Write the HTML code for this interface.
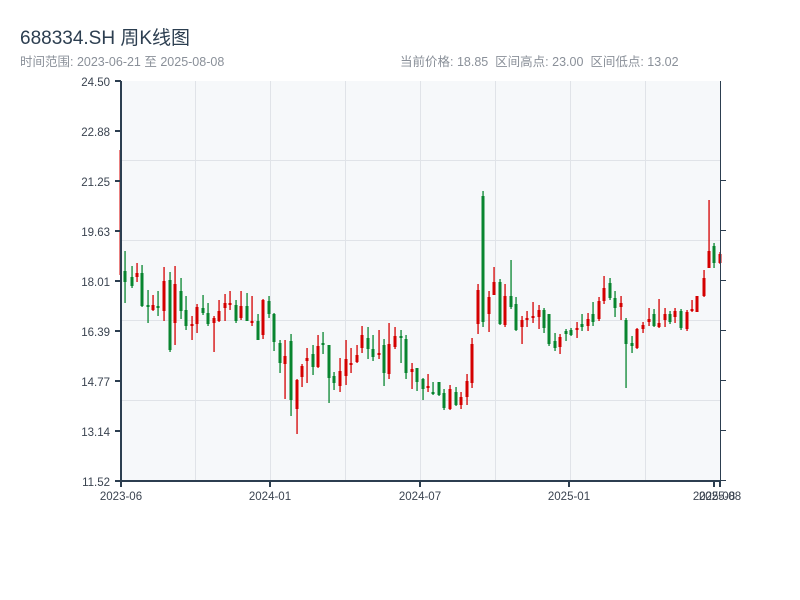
<!DOCTYPE html>
<html><head><meta charset="utf-8"><style>
body{margin:0;width:800px;height:600px;background:#fff;font-family:"Liberation Sans","Noto Sans CJK SC",sans-serif;overflow:hidden;position:relative}
.t{position:absolute;white-space:nowrap}
</style></head><body>
<div class="t" style="left:20px;top:23px;font-size:19px;color:#2c3e50">688334.SH 周K线图</div>
<div class="t" style="left:20px;top:51px;font-size:12.5px;color:#8a9099">时间范围: 2023-06-21 至 2025-08-08</div>
<div class="t" style="left:400px;top:51px;font-size:12.5px;color:#8a9099">当前价格: 18.85 &nbsp;区间高点: 23.00 &nbsp;区间低点: 13.02</div>
<svg width="800" height="600" style="position:absolute;left:0;top:0" xmlns="http://www.w3.org/2000/svg">
<rect x="121" y="81" width="599" height="400" fill="#f6f8fa"/>
<g stroke="#e0e3e8" stroke-width="1">
<line x1="195.5" y1="81" x2="195.5" y2="481"/><line x1="270.5" y1="81" x2="270.5" y2="481"/><line x1="345.5" y1="81" x2="345.5" y2="481"/><line x1="420.5" y1="81" x2="420.5" y2="481"/><line x1="495.5" y1="81" x2="495.5" y2="481"/><line x1="570.5" y1="81" x2="570.5" y2="481"/><line x1="645.5" y1="81" x2="645.5" y2="481"/>
<line x1="121" y1="160.5" x2="720" y2="160.5"/><line x1="121" y1="240.5" x2="720" y2="240.5"/><line x1="121" y1="320.5" x2="720" y2="320.5"/><line x1="121" y1="400.5" x2="720" y2="400.5"/>
</g>
<g fill="#d40000">
<rect x="119.5" y="150" width="1.5" height="125"/>
<rect x="136.4" y="263" width="1.3" height="19"/><rect x="135.5" y="273" width="3" height="4"/>
<rect x="152.4" y="295" width="1.3" height="16"/><rect x="151.5" y="305" width="3" height="5"/>
<rect x="163.4" y="267" width="1.3" height="54"/><rect x="162.5" y="281" width="3" height="30"/>
<rect x="174.4" y="266" width="1.3" height="79"/><rect x="173.5" y="284" width="3" height="39"/>
<rect x="191.4" y="316" width="1.3" height="24"/><rect x="190.5" y="324" width="3" height="2"/>
<rect x="196.4" y="304" width="1.3" height="29"/><rect x="195.5" y="307" width="3" height="17"/>
<rect x="213.4" y="316" width="1.3" height="36"/><rect x="212.5" y="318" width="3" height="5"/>
<rect x="218.4" y="300" width="1.3" height="22"/><rect x="217.5" y="311" width="3" height="10"/>
<rect x="224.4" y="294" width="1.3" height="27"/><rect x="223.5" y="303" width="3" height="5"/>
<rect x="229.4" y="291" width="1.3" height="19"/><rect x="228.5" y="303" width="3" height="2"/>
<rect x="240.4" y="291" width="1.3" height="29"/><rect x="239.5" y="306" width="3" height="12"/>
<rect x="251.4" y="296" width="1.3" height="30"/><rect x="250.5" y="321" width="3" height="2"/>
<rect x="262.4" y="299" width="1.3" height="40"/><rect x="261.5" y="300" width="3" height="35"/>
<rect x="284.4" y="340" width="1.3" height="59"/><rect x="283.5" y="356" width="3" height="8"/>
<rect x="296.4" y="379" width="1.3" height="55"/><rect x="295.5" y="380" width="3" height="29"/>
<rect x="301.4" y="364" width="1.3" height="23"/><rect x="300.5" y="366" width="3" height="11"/>
<rect x="306.4" y="348" width="1.3" height="35"/><rect x="305.5" y="358" width="3" height="3"/>
<rect x="317.4" y="335" width="1.3" height="33"/><rect x="316.5" y="346" width="3" height="21"/>
<rect x="339.4" y="358" width="1.3" height="34"/><rect x="338.5" y="371" width="3" height="15"/>
<rect x="345.4" y="340" width="1.3" height="45"/><rect x="344.5" y="359" width="3" height="17"/>
<rect x="350.4" y="348" width="1.3" height="25"/><rect x="349.5" y="363" width="3" height="2"/>
<rect x="356.4" y="345" width="1.3" height="18"/><rect x="355.5" y="355" width="3" height="7"/>
<rect x="361.4" y="326" width="1.3" height="27"/><rect x="360.5" y="335" width="3" height="13"/>
<rect x="378.4" y="330" width="1.3" height="29"/><rect x="377.5" y="353" width="3" height="2"/>
<rect x="388.4" y="323" width="1.3" height="56"/><rect x="387.5" y="344" width="3" height="30"/>
<rect x="394.4" y="327" width="1.3" height="22"/><rect x="393.5" y="336" width="3" height="11"/>
<rect x="411.4" y="363" width="1.3" height="26"/><rect x="410.5" y="369" width="3" height="3"/>
<rect x="427.4" y="374" width="1.3" height="18"/><rect x="426.5" y="386" width="3" height="2"/>
<rect x="449.4" y="385" width="1.3" height="25"/><rect x="448.5" y="389" width="3" height="20"/>
<rect x="460.4" y="392" width="1.3" height="17"/><rect x="459.5" y="397" width="3" height="8"/>
<rect x="466.4" y="374" width="1.3" height="31"/><rect x="465.5" y="381" width="3" height="16"/>
<rect x="471.4" y="338" width="1.3" height="50"/><rect x="470.5" y="344" width="3" height="39"/>
<rect x="477.4" y="284" width="1.3" height="50"/><rect x="476.5" y="290" width="3" height="34"/>
<rect x="488.4" y="291" width="1.3" height="41"/><rect x="487.5" y="297" width="3" height="17"/>
<rect x="493.4" y="267" width="1.3" height="28"/><rect x="492.5" y="282" width="3" height="13"/>
<rect x="504.4" y="284" width="1.3" height="43"/><rect x="503.5" y="296" width="3" height="29"/>
<rect x="521.4" y="316" width="1.3" height="28"/><rect x="520.5" y="320" width="3" height="7"/>
<rect x="526.4" y="311" width="1.3" height="16"/><rect x="525.5" y="318" width="3" height="2"/>
<rect x="532.4" y="302" width="1.3" height="21"/><rect x="531.5" y="316" width="3" height="2"/>
<rect x="538.4" y="305" width="1.3" height="24"/><rect x="537.5" y="310" width="3" height="7"/>
<rect x="559.4" y="334" width="1.3" height="20"/><rect x="558.5" y="337" width="3" height="10"/>
<rect x="576.4" y="322" width="1.3" height="16"/><rect x="575.5" y="328" width="3" height="2"/>
<rect x="587.4" y="313" width="1.3" height="18"/><rect x="586.5" y="319" width="3" height="7"/>
<rect x="598.4" y="297" width="1.3" height="24"/><rect x="597.5" y="301" width="3" height="18"/>
<rect x="603.4" y="276" width="1.3" height="28"/><rect x="602.5" y="288" width="3" height="13"/>
<rect x="620.4" y="296" width="1.3" height="24"/><rect x="619.5" y="303" width="3" height="4"/>
<rect x="636.4" y="328" width="1.3" height="21"/><rect x="635.5" y="329" width="3" height="19"/>
<rect x="642.4" y="322" width="1.3" height="11"/><rect x="641.5" y="325" width="3" height="4"/>
<rect x="648.4" y="308" width="1.3" height="18"/><rect x="647.5" y="319" width="3" height="3"/>
<rect x="658.4" y="299" width="1.3" height="29"/><rect x="657.5" y="323" width="3" height="4"/>
<rect x="664.4" y="308" width="1.3" height="19"/><rect x="663.5" y="314" width="3" height="6"/>
<rect x="674.4" y="308" width="1.3" height="15"/><rect x="673.5" y="311" width="3" height="6"/>
<rect x="686.4" y="310" width="1.3" height="21"/><rect x="685.5" y="312" width="3" height="17"/>
<rect x="691.4" y="300" width="1.3" height="12"/><rect x="690.5" y="309" width="3" height="2"/>
<rect x="696.4" y="296" width="1.3" height="16"/><rect x="695.5" y="296" width="3" height="16"/>
<rect x="703.4" y="270" width="1.3" height="27"/><rect x="702.5" y="278" width="3" height="18"/>
<rect x="708.4" y="200" width="1.3" height="68"/><rect x="707.5" y="251" width="3" height="17"/>
<rect x="719.4" y="252" width="1.3" height="12"/><rect x="718.5" y="254" width="3" height="9"/>
</g>
<g fill="#08852f">
<rect x="124.4" y="251" width="1.3" height="52"/><rect x="123.5" y="271" width="3" height="11"/>
<rect x="131.4" y="266" width="1.3" height="22"/><rect x="130.5" y="277" width="3" height="9"/>
<rect x="141.4" y="265" width="1.3" height="42"/><rect x="140.5" y="273" width="3" height="33"/>
<rect x="147.4" y="290" width="1.3" height="33"/><rect x="146.5" y="305" width="3" height="2"/>
<rect x="157.4" y="291" width="1.3" height="25"/><rect x="156.5" y="306" width="3" height="2"/>
<rect x="169.4" y="272" width="1.3" height="80"/><rect x="168.5" y="280" width="3" height="70"/>
<rect x="180.4" y="278" width="1.3" height="41"/><rect x="179.5" y="291" width="3" height="20"/>
<rect x="185.4" y="296" width="1.3" height="34"/><rect x="184.5" y="310" width="3" height="16"/>
<rect x="202.4" y="295" width="1.3" height="20"/><rect x="201.5" y="308" width="3" height="5"/>
<rect x="207.4" y="303" width="1.3" height="23"/><rect x="206.5" y="313" width="3" height="11"/>
<rect x="235.4" y="300" width="1.3" height="23"/><rect x="234.5" y="305" width="3" height="16"/>
<rect x="246.4" y="293" width="1.3" height="28"/><rect x="245.5" y="306" width="3" height="15"/>
<rect x="257.4" y="314" width="1.3" height="26"/><rect x="256.5" y="321" width="3" height="19"/>
<rect x="268.4" y="296" width="1.3" height="22"/><rect x="267.5" y="301" width="3" height="13"/>
<rect x="273.4" y="313" width="1.3" height="38"/><rect x="272.5" y="314" width="3" height="28"/>
<rect x="279.4" y="340" width="1.3" height="33"/><rect x="278.5" y="343" width="3" height="20"/>
<rect x="290.4" y="334" width="1.3" height="82"/><rect x="289.5" y="341" width="3" height="59"/>
<rect x="312.4" y="345" width="1.3" height="30"/><rect x="311.5" y="354" width="3" height="13"/>
<rect x="322.4" y="332" width="1.3" height="22"/><rect x="321.5" y="343" width="3" height="2"/>
<rect x="328.4" y="345" width="1.3" height="58"/><rect x="327.5" y="345" width="3" height="33"/>
<rect x="333.4" y="372" width="1.3" height="18"/><rect x="332.5" y="376" width="3" height="7"/>
<rect x="367.4" y="327" width="1.3" height="32"/><rect x="366.5" y="338" width="3" height="11"/>
<rect x="372.4" y="335" width="1.3" height="26"/><rect x="371.5" y="349" width="3" height="8"/>
<rect x="383.4" y="339" width="1.3" height="47"/><rect x="382.5" y="345" width="3" height="28"/>
<rect x="400.4" y="330" width="1.3" height="33"/><rect x="399.5" y="336" width="3" height="2"/>
<rect x="405.4" y="335" width="1.3" height="44"/><rect x="404.5" y="339" width="3" height="34"/>
<rect x="416.4" y="368" width="1.3" height="23"/><rect x="415.5" y="368" width="3" height="14"/>
<rect x="422.4" y="378" width="1.3" height="22"/><rect x="421.5" y="379" width="3" height="10"/>
<rect x="432.4" y="382" width="1.3" height="13"/><rect x="431.5" y="392" width="3" height="2"/>
<rect x="438.4" y="382" width="1.3" height="14"/><rect x="437.5" y="382" width="3" height="13"/>
<rect x="443.4" y="389" width="1.3" height="21"/><rect x="442.5" y="393" width="3" height="15"/>
<rect x="455.4" y="387" width="1.3" height="19"/><rect x="454.5" y="392" width="3" height="13"/>
<rect x="482.4" y="191" width="1.3" height="136"/><rect x="481.5" y="196" width="3" height="126"/>
<rect x="499.4" y="279" width="1.3" height="46"/><rect x="498.5" y="282" width="3" height="42"/>
<rect x="510.4" y="260" width="1.3" height="49"/><rect x="509.5" y="296" width="3" height="11"/>
<rect x="515.4" y="297" width="1.3" height="34"/><rect x="514.5" y="304" width="3" height="26"/>
<rect x="543.4" y="308" width="1.3" height="25"/><rect x="542.5" y="310" width="3" height="18"/>
<rect x="548.4" y="314" width="1.3" height="32"/><rect x="547.5" y="314" width="3" height="30"/>
<rect x="554.4" y="333" width="1.3" height="18"/><rect x="553.5" y="341" width="3" height="7"/>
<rect x="565.4" y="329" width="1.3" height="12"/><rect x="564.5" y="331" width="3" height="3"/>
<rect x="570.4" y="328" width="1.3" height="8"/><rect x="569.5" y="330" width="3" height="5"/>
<rect x="581.4" y="314" width="1.3" height="17"/><rect x="580.5" y="324" width="3" height="3"/>
<rect x="592.4" y="302" width="1.3" height="24"/><rect x="591.5" y="314" width="3" height="8"/>
<rect x="609.4" y="278" width="1.3" height="22"/><rect x="608.5" y="283" width="3" height="15"/>
<rect x="614.4" y="291" width="1.3" height="26"/><rect x="613.5" y="298" width="3" height="10"/>
<rect x="625.4" y="318" width="1.3" height="70"/><rect x="624.5" y="320" width="3" height="24"/>
<rect x="631.4" y="336" width="1.3" height="17"/><rect x="630.5" y="343" width="3" height="3"/>
<rect x="653.4" y="309" width="1.3" height="18"/><rect x="652.5" y="314" width="3" height="12"/>
<rect x="669.4" y="311" width="1.3" height="13"/><rect x="668.5" y="314" width="3" height="8"/>
<rect x="680.4" y="309" width="1.3" height="21"/><rect x="679.5" y="311" width="3" height="17"/>
<rect x="713.4" y="243" width="1.3" height="25"/><rect x="712.5" y="246" width="3" height="17"/>
</g>
<g stroke="#2c3e50" stroke-width="2" fill="none">
<line x1="121" y1="81" x2="121" y2="482"/><line x1="120" y1="481" x2="721" y2="481"/>
<line x1="115" y1="81" x2="121" y2="81"/><line x1="115" y1="131" x2="121" y2="131"/><line x1="115" y1="181" x2="121" y2="181"/><line x1="115" y1="231" x2="121" y2="231"/><line x1="115" y1="281" x2="121" y2="281"/><line x1="115" y1="331" x2="121" y2="331"/><line x1="115" y1="381" x2="121" y2="381"/><line x1="115" y1="431" x2="121" y2="431"/><line x1="115" y1="481" x2="121" y2="481"/>
<line x1="121" y1="481" x2="121" y2="487"/><line x1="270" y1="481" x2="270" y2="487"/><line x1="420" y1="481" x2="420" y2="487"/><line x1="569" y1="481" x2="569" y2="487"/><line x1="714" y1="481" x2="714" y2="487"/><line x1="720" y1="481" x2="720" y2="487"/>
</g>
<g stroke="#2c3e50" stroke-width="1">
<line x1="720.5" y1="81" x2="720.5" y2="481"/>
<line x1="720" y1="180.5" x2="726" y2="180.5"/><line x1="720" y1="230.5" x2="726" y2="230.5"/><line x1="720" y1="280.5" x2="726" y2="280.5"/><line x1="720" y1="330.5" x2="726" y2="330.5"/><line x1="720" y1="380.5" x2="726" y2="380.5"/><line x1="720" y1="430.5" x2="726" y2="430.5"/><line x1="720" y1="480.5" x2="726" y2="480.5"/>
</g>
<g font-size="11.5" fill="#3a4350" text-anchor="end" font-family="Liberation Sans,sans-serif">
<text x="110" y="86">24.50</text><text x="110" y="136">22.88</text><text x="110" y="186">21.25</text><text x="110" y="236">19.63</text><text x="110" y="286">18.01</text><text x="110" y="336">16.39</text><text x="110" y="386">14.77</text><text x="110" y="436">13.14</text><text x="110" y="486">11.52</text>
</g>
<g font-size="11.5" fill="#3a4350" text-anchor="middle" font-family="Liberation Sans,sans-serif">
<text x="121" y="500">2023-06</text><text x="270" y="500">2024-01</text><text x="420" y="500">2024-07</text><text x="569" y="500">2025-01</text><text x="714" y="500">2025-08</text><text x="720" y="500">2025-08</text>
</g>
</svg>
</body></html>
